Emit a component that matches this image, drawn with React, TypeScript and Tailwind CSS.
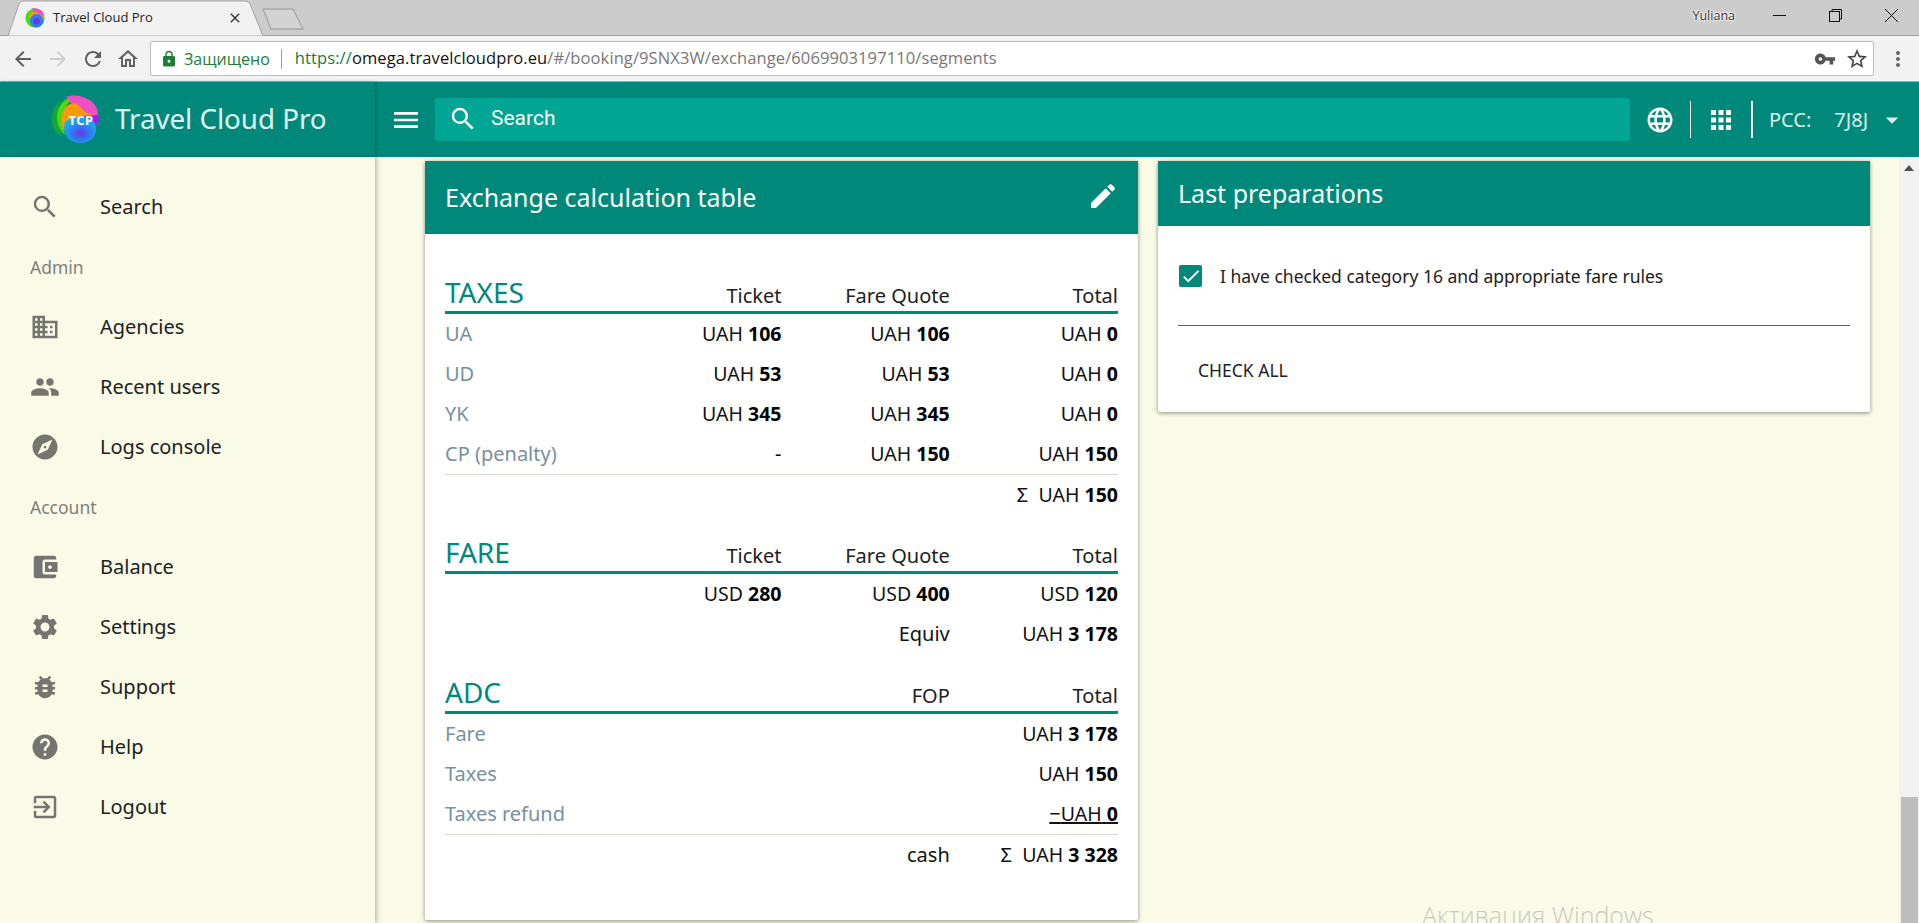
import React from "react";
import {
  MdSearch, MdDomain, MdPeople, MdExplore, MdAccountBalanceWallet, MdSettings, MdBugReport, MdHelp, MdExitToApp,
  MdMenu, MdLanguage, MdApps, MdArrowDropDown, MdEdit, MdCheck, MdArrowBack, MdArrowForward, MdRefresh, MdOutlineHome,
  MdLock, MdVpnKey, MdStarBorder, MdMoreVert, MdClose,
} from "react-icons/md";

function Logo({ size }: { size: number }) {
  const id = `g${size}`;
  return (
    <svg width={size} height={size} viewBox="0 0 50 50" className="shrink-0">
      <defs>
        <radialGradient id={id} cx="0.52" cy="0.62" r="0.6">
          <stop offset="0" stopColor="#6a35e8" />
          <stop offset="0.5" stopColor="#2f7cf5" />
          <stop offset="1" stopColor="#12b5ea" />
        </radialGradient>
      </defs>
      <path d="M11 5C3 10-1 24 4 34c2 4 5 6 9 8C7 34 5 18 11 5z" fill="#12a838" />
      <path d="M27 2C15 1 7 10 7 22c0 8 3 14 8 18-3-8-4-15-2-22 2-8 8-13 14-16z" fill="#4fd80f" />
      <path d="M16 2C26-2 42 2 47 14c1 3 1 6 0 8L26 15 16 2z" fill="#ee4fc4" />
      <path d="M12 22c0-9 7-15 14-13 6 2 6 7 11 9 4 2 9 1 11 5 1 5-3 11-8 13L14 36c-2-4-3-9-2-14z" fill="#fb9a06" />
      <path d="M31 21l17-1c2 4 0 10-5 14l-12-1z" fill="#9a1ff0" />
      <path d="M15 27c5-5 24-7 29 0 5 8 1 19-11 21-12 2-22-8-18-21z" fill={`url(#${id})`} />
      <path d="M20 40c4 4 14 5 20 0-3 6-15 7-20 0z" fill="#0c90b8" />
      <text x="31" y="30" textAnchor="middle" fontFamily="'Noto Sans',sans-serif" fontWeight="700" fontSize="13" letterSpacing="0.4" fill="#ffffff">TCP</text>
    </svg>
  );
}

function Favicon() {
  return (
    <svg width={20} height={20} viewBox="0 0 50 50" className="shrink-0">
      <circle cx="25" cy="25" r="24" fill="#4fd80f" />
      <path d="M16 2C28-2 44 4 48 18L26 15z" fill="#ee4fc4" />
      <path d="M10 24C10 13 20 5 28 10c6 3 8 8 20 10 1 5-2 10-8 14L12 36z" fill="#fb9a06" />
      <circle cx="29" cy="32" r="17" fill="#2f7cf5" />
      <circle cx="29" cy="33" r="8" fill="#6a35e8" />
    </svg>
  );
}

function ChromeBars() {
  return (
    <div className="shrink-0 font-['Open_Sans',sans-serif]">
      <div className="h-[36px] bg-[#cccccc] border-b border-[#a3a3a3] flex items-start pl-[8px]">
        <div className="relative w-[255px] h-[36px] flex items-center pl-[17px] pr-[20px]">
          <svg className="absolute inset-0" width="255" height="36" viewBox="0 0 255 36">
            <path d="M0 36 L11 4 Q12 1 15 1 L238 1 Q241 1 242 4 L255 36 Z" fill="#f2f2f2" stroke="#a3a3a3" />
          </svg>
          <div className="relative flex items-center w-full h-full">
            <Favicon />
            <span className="ml-[8px] text-[13px] text-[#222] whitespace-nowrap">Travel Cloud Pro</span>
            <MdClose className="ml-auto text-[#333]" size={16} />
          </div>
        </div>
        <svg width="44" height="22" viewBox="0 0 44 22" className="mt-[8px] -ml-[2px]">
          <path d="M2 1 L32 1 L42 21 L10 21 Z" fill="#d3d3d3" stroke="#a8a8a8" strokeWidth="1.4" strokeLinejoin="round" />
        </svg>
        <span className="ml-auto mt-[7px] mr-[184px] text-[12.5px] text-[#333] [text-shadow:0_0_2px_#fff,0_0_3px_#fff,0_0_3px_#fff]">Yuliana</span>
        <div className="absolute right-[21px] top-0 flex items-center h-[30px] gap-[43px]">
          <svg width="13" height="13" viewBox="0 0 13 13"><path d="M0 6.5H13" stroke="#111" /></svg>
          <svg width="13" height="13" viewBox="0 0 13 13" fill="none" stroke="#111"><rect x="0.5" y="2.5" width="10" height="10" /><path d="M3 2.5V0.5H12.5V10H10.5" /></svg>
          <svg width="13" height="13" viewBox="0 0 13 13" stroke="#111"><path d="M0 0L13 13M13 0L0 13" /></svg>
        </div>
      </div>
      <div className="h-[46px] bg-[#f2f2f2] border-b border-[#a8a8a8] flex items-center">
        <div className="w-[150px] flex items-center pl-[11px] gap-[11px]">
          <MdArrowBack size={24} className="text-[#5f5f5f]" />
          <MdArrowForward size={24} className="text-[#d0d0d0]" />
          <MdRefresh size={24} className="text-[#5f5f5f]" />
          <MdOutlineHome size={24} className="text-[#5f5f5f]" />
        </div>
        <div className="w-[1724px] h-[35px] bg-white border border-[#bdbdbd] rounded-[2px] flex items-center pl-[9px] pr-[4px] text-[16px]">
          <MdLock size={18} className="text-[#1e7e34]" />
          <span className="ml-[6px] text-[#1e7e34]">Защищено</span>
          <span className="ml-[11px] w-px h-[20px] bg-[#9e9e9e]" />
          <span className="ml-[13px] whitespace-nowrap text-[16.5px] tracking-[0.1px] text-[#777]">
            <span className="text-[#0b8043]">https://</span>
            <span className="text-[#111]">omega.travelcloudpro.eu</span>
            /#/booking/9SNX3W/exchange/6069903197110/segments
          </span>
          <MdVpnKey size={22} className="ml-auto text-[#555]" />
          <MdStarBorder size={24} className="ml-[9px] text-[#444]" />
        </div>
        <MdMoreVert size={24} className="ml-[12px] text-[#666]" />
      </div>
    </div>
  );
}

function AppHeader() {
  return (
    <header className="h-[75px] shrink-0 bg-[#00897b] flex items-center text-[#d9f0ec]">
      <div className="w-[375px] h-full flex items-center pl-[50px] shadow-[1px_0_3px_rgba(0,0,0,0.25)]">
        <Logo size={50} />
        <span className="ml-[15px] -mt-[1px] text-[27.7px] text-[#e0f2f1] whitespace-nowrap">Travel Cloud Pro</span>
      </div>
      <MdMenu size={32} className="ml-[15px] text-white shrink-0" />
      <div className="ml-[13px] w-[1195px] h-[43px] bg-[#00a693] rounded-[2px] flex items-center pl-[13px] text-white">
        <MdSearch size={30} className="-mt-[2px]" />
        <span className="ml-[13px] text-[21px] -mt-[1px] font-['Roboto',sans-serif]">Search</span>
      </div>
      <MdLanguage size={30} className="ml-[15px] text-white shrink-0" />
      <span className="ml-[15px] w-px h-[37px] bg-white" />
      <MdApps size={30} className="ml-[15px] text-white shrink-0" />
      <span className="ml-[15px] w-[2px] h-[37px] bg-white" />
      <span className="ml-[16px] text-[20px]">PCC:</span>
      <span className="ml-[23px] text-[20px]">7J8J</span>
      <MdArrowDropDown size={30} className="ml-[9px] text-[#d9f0ec] shrink-0" />
    </header>
  );
}

const topItems = [{ label: "Search", Icon: MdSearch }];
const adminItems = [
  { label: "Agencies", Icon: MdDomain },
  { label: "Recent users", Icon: MdPeople },
  { label: "Logs console", Icon: MdExplore },
];
const accountItems = [
  { label: "Balance", Icon: MdAccountBalanceWallet },
  { label: "Settings", Icon: MdSettings },
  { label: "Support", Icon: MdBugReport },
  { label: "Help", Icon: MdHelp },
  { label: "Logout", Icon: MdExitToApp },
];

function NavList({ items }: { items: { label: string; Icon: React.ComponentType<{ size?: number; className?: string }> }[] }) {
  return (
    <>
      {items.map(({ label, Icon }) => (
        <div key={label} className="h-[60px] flex items-center pl-[30px]">
          <Icon size={30} className="text-[#757570] shrink-0" />
          <span className="ml-[40px] text-[20px] text-[#212121]">{label}</span>
        </div>
      ))}
    </>
  );
}

function SectionLabel({ children }: { children: React.ReactNode }) {
  return <div className="h-[60px] flex items-center pl-[30px] pt-[1px] text-[17.5px] text-[#80807a]">{children}</div>;
}

function Sidebar() {
  return (
    <aside className="w-[375px] shrink-0 bg-[#f9fbe7] pt-[20px] shadow-[2px_0_4px_rgba(0,0,0,0.25)] z-10">
      <NavList items={topItems} />
      <SectionLabel>Admin</SectionLabel>
      <NavList items={adminItems} />
      <SectionLabel>Account</SectionLabel>
      <NavList items={accountItems} />
    </aside>
  );
}

function Amount({ cur, val }: { cur: string; val: string }) {
  return (
    <span className="text-[#111] text-[19.5px]">
      {cur} <strong className="font-bold text-black">{val}</strong>
    </span>
  );
}

function SectionHead({ title, cols }: { title: string; cols: string[] }) {
  return (
    <div className="grid grid-cols-[2fr_1fr_1fr] h-[40px] items-end border-b-[3px] border-[#00897b] leading-[30px] text-[20px] text-[#212121]">
      <div className="flex justify-between items-end">
        <span className="text-[28px] text-[#00897b] leading-[34px] mb-[2px]">{title}</span>
        <span>{cols.length === 3 ? cols[0] : ""}</span>
      </div>
      <span className="text-right">{cols.length === 3 ? cols[1] : cols[0]}</span>
      <span className="text-right">{cols.length === 3 ? cols[2] : cols[1]}</span>
    </div>
  );
}

function Row({ label, a, b, c, line }: { label?: string; a?: React.ReactNode; b?: React.ReactNode; c?: React.ReactNode; line?: boolean }) {
  return (
    <div className={`grid grid-cols-[2fr_1fr_1fr] h-[40px] items-center text-[20px] ${line ? "border-b border-[#d8d8d0] box-content" : ""}`}>
      <div className="flex justify-between">
        <span className="text-[#78909c]">{label}</span>
        <span className="text-[#111]">{a}</span>
      </div>
      <span className="text-right text-[#111]">{b}</span>
      <span className="text-right text-[#111]">{c}</span>
    </div>
  );
}

function CalcCard() {
  return (
    <section className="w-[713px] h-[759px] bg-white shadow-[0_1px_4px_rgba(0,0,0,0.45)] rounded-b-[2px] shrink-0">
      <div className="h-[73px] bg-[#00897b] flex items-center justify-between pl-[20px] pr-[19px] text-white">
        <span className="text-[25px]">Exchange calculation table</span>
        <MdEdit size={32} className="-mt-[3px]" />
      </div>
      <div className="px-[20px] pt-[40px]">
        <SectionHead title="TAXES" cols={["Ticket", "Fare Quote", "Total"]} />
        <Row label="UA" a={<Amount cur="UAH" val="106" />} b={<Amount cur="UAH" val="106" />} c={<Amount cur="UAH" val="0" />} />
        <Row label="UD" a={<Amount cur="UAH" val="53" />} b={<Amount cur="UAH" val="53" />} c={<Amount cur="UAH" val="0" />} />
        <Row label="YK" a={<Amount cur="UAH" val="345" />} b={<Amount cur="UAH" val="345" />} c={<Amount cur="UAH" val="0" />} />
        <Row label="CP (penalty)" a="-" b={<Amount cur="UAH" val="150" />} c={<Amount cur="UAH" val="150" />} line />
        <Row c={<span>Σ&nbsp; <Amount cur="UAH" val="150" /></span>} />
        <div className="h-[19px]" />
        <SectionHead title="FARE" cols={["Ticket", "Fare Quote", "Total"]} />
        <Row a={<Amount cur="USD" val="280" />} b={<Amount cur="USD" val="400" />} c={<Amount cur="USD" val="120" />} />
        <Row b="Equiv" c={<Amount cur="UAH" val="3 178" />} />
        <div className="h-[20px]" />
        <SectionHead title="ADC" cols={["FOP", "Total"]} />
        <Row label="Fare" c={<Amount cur="UAH" val="3 178" />} />
        <Row label="Taxes" c={<Amount cur="UAH" val="150" />} />
        <Row label="Taxes refund" c={<span className="underline">−<Amount cur="UAH" val="0" /></span>} line />
        <Row b="cash" c={<span>Σ&nbsp; <Amount cur="UAH" val="3 328" /></span>} />
      </div>
    </section>
  );
}

function PrepCard() {
  return (
    <section className="w-[712px] h-[251px] bg-white shadow-[0_1px_4px_rgba(0,0,0,0.45)] rounded-b-[2px] shrink-0">
      <div className="h-[65px] bg-[#00897b] flex items-center pl-[20px] text-white text-[25px]">Last preparations</div>
      <div className="px-[20px] pt-[39px]">
        <div className="flex items-center pb-[38px] border-b border-[#00897b]">
          <span className="w-[23px] h-[22px] bg-[#00897b] rounded-[2px] flex items-center justify-center shrink-0 ml-px">
            <MdCheck size={22} className="text-white" />
          </span>
          <span className="ml-[18px] text-[17.5px] leading-[22px] text-[#212121]">I have checked category 16 and appropriate fare rules</span>
        </div>
        <div className="pl-[20px] pt-[33px] text-[17.5px] leading-[22px] text-[#212121]">CHECK ALL</div>
      </div>
    </section>
  );
}

function Scrollbar() {
  return (
    <div className="w-[20px] shrink-0 bg-[#f1f1f1] flex flex-col items-center">
      <svg width="10" height="6" viewBox="0 0 10 6" className="mt-[8px]"><path d="M0 6L5 0L10 6Z" fill="#505050" /></svg>
      <div className="mt-auto w-[17px] h-[126px] bg-[#bdbdbd]" />
    </div>
  );
}

export default function App() {
  return (
    <div className="relative w-[1919px] h-[923px] overflow-hidden flex flex-col bg-[#f9fbe7] font-['Noto_Sans',sans-serif]">
      <ChromeBars />
      <AppHeader />
      <div className="flex flex-1 min-h-0">
        <Sidebar />
        <main className="flex-1 flex items-start gap-[20px] pl-[50px] pt-[4px]">
          <CalcCard />
          <PrepCard />
        </main>
        <Scrollbar />
      </div>
      <span className="absolute left-[1422px] top-[898px] text-[25px] leading-[34px] text-[#c9c9c2] font-['Open_Sans',sans-serif] font-light whitespace-nowrap">
        Активация Windows
      </span>
    </div>
  );
}
